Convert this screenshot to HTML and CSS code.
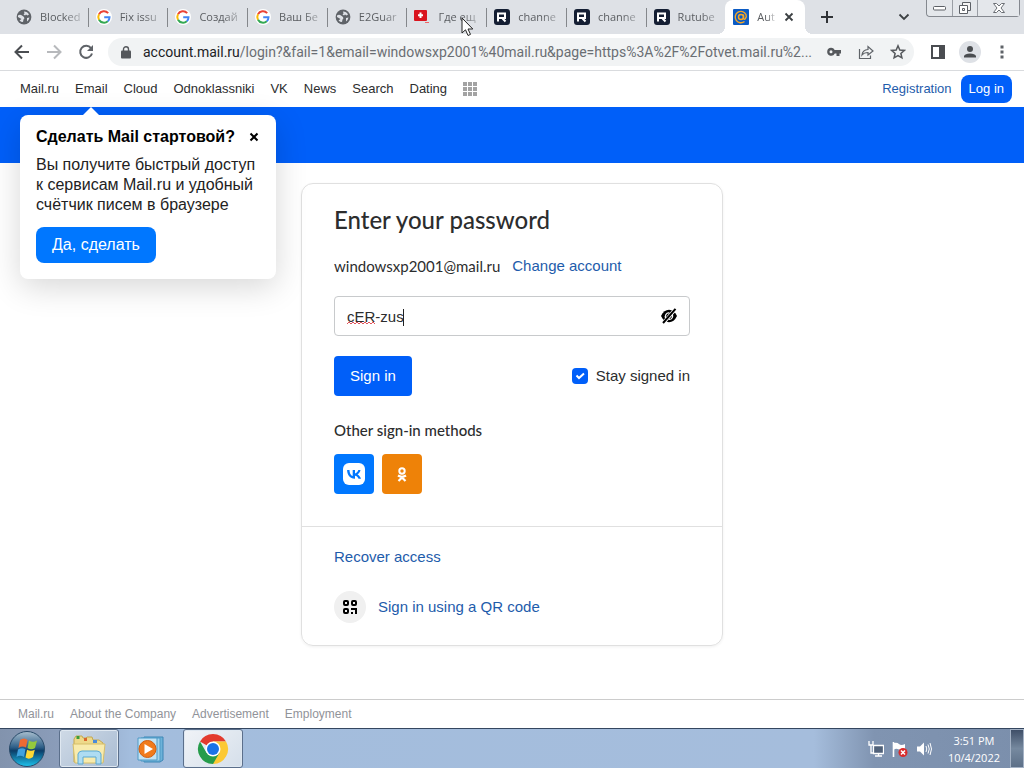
FILE: index.html
```html
<!DOCTYPE html>
<html lang="en">

<head>
    <meta charset="utf-8">
    <title>Authorization</title>
    <link rel="stylesheet" href="styles.css">
</head>

<body>
    <!-- shared icons -->
    <svg class="sprite" aria-hidden="true">
        <symbol id="globe" viewBox="0 0 16 16">
            <circle cx="8" cy="8" r="7.4" fill="#5f6368" />
            <path d="M2 6.500Q4 5 6 6.500L8 8Q9 9.500 7.500 10.500L7 13Q5 13 3.500 11.500L5.500 10L2 8ZM8 2.500Q11.500 2.500 13 5.500L11.500 6.500L10 5.500L9 6.500L7.500 5.500L8.500 4.500ZM11 9L13.500 8.500Q13 11 11 12.500Z" fill="#dee1e6" />
        </symbol>
        <symbol id="google" viewBox="0 0 16 16">
            <circle cx="8" cy="8" r="8" fill="#fff" />
            <path d="M12.200 4.100A5.700 5.700 0 0 0 3 5.300" stroke="#ea4335" />
            <path d="M3 5.300A5.700 5.700 0 0 0 3 10.700" stroke="#fbbc05" />
            <path d="M3 10.700A5.700 5.700 0 0 0 11.800 12.200" stroke="#34a853" />
            <path d="M11.800 12.200Q13.500 10.800 13.500 8.200H8.200" stroke="#4285f4" />
        </symbol>
        <symbol id="rutube" viewBox="0 0 16 16">
            <rect width="16" height="16" rx="3" fill="#141e33" />
            <path d="M4 12.500V4.500H11V9H4.500M8.500 9.500L11.500 12.500" fill="none" stroke="#fff" stroke-width="2" />
        </symbol>
    </svg>

    <div class="tab-strip">
        <div class="tabs">
            <div class="tab"><svg class="favicon"><use href="#globe" /></svg><span class="tab-title">Blocked</span></div>
            <div class="tab"><svg class="favicon google"><use href="#google" /></svg><span class="tab-title">Fix issu</span></div>
            <div class="tab"><svg class="favicon google"><use href="#google" /></svg><span class="tab-title">Создай</span></div>
            <div class="tab"><svg class="favicon google"><use href="#google" /></svg><span class="tab-title">Ваш Бе</span></div>
            <div class="tab"><svg class="favicon"><use href="#globe" /></svg><span class="tab-title">E2Guar</span></div>
            <div class="tab">
                <svg class="favicon" viewBox="0 0 16 16">
                    <rect y="1" width="13" height="11" rx="1" fill="#d9141e" />
                    <path d="M6.500 3.500V9M4 6.200H9" stroke="#fff" stroke-width="2" />
                    <path d="M11 13.500H15" stroke="#e66" />
                </svg>
                <span class="tab-title">Где ещ</span>
            </div>
            <div class="tab"><svg class="favicon"><use href="#rutube" /></svg><span class="tab-title">channe</span></div>
            <div class="tab"><svg class="favicon"><use href="#rutube" /></svg><span class="tab-title">channe</span></div>
            <div class="tab"><svg class="favicon"><use href="#rutube" /></svg><span class="tab-title">Rutube</span></div>
            <div class="tab active">
                <svg class="favicon" viewBox="0 0 16 16">
                    <rect width="16" height="16" rx="1" fill="#0b5bc4" />
                    <circle cx="8" cy="8" r="2.500" fill="none" stroke="#f9a825" stroke-width="1.500" />
                    <path d="M10.500 5.500V9Q10.800 10.800 12.200 10Q14 8 13 5.500A5.700 5.700 0 1 0 11.500 12.500" fill="none" stroke="#f9a825" stroke-width="1.400" />
                </svg>
                <span class="tab-title">Aut</span>
                <button class="icon-button tab-close" aria-label="Close tab">
                    <svg width="10" height="10" viewBox="0 0 10 10"><path d="M1.500 1.500L8.500 8.500M8.500 1.500L1.500 8.500" stroke="#3c4043" stroke-width="1.800" /></svg>
                </button>
            </div>
        </div>
        <button class="icon-button new-tab" aria-label="New tab">
            <svg width="12" height="12" viewBox="0 0 12 12"><path d="M6 0V12M0 6H12" stroke="#303337" stroke-width="2" /></svg>
        </button>
        <button class="icon-button tab-search" aria-label="Search tabs">
            <svg width="12" height="8" viewBox="0 0 12 8"><path d="M1.500 1.500L6 6L10.500 1.500" fill="none" stroke="#3c4043" stroke-width="1.800" /></svg>
        </button>
        <div class="window-buttons">
            <button aria-label="Minimize"><svg width="13" height="6" viewBox="0 0 13 6"><rect x=".5" y="1.500" width="12" height="3.500" rx="1" fill="#fff" stroke="#5c6066" /></svg></button>
            <button aria-label="Restore"><svg width="14" height="14" viewBox="0 0 14 14"><path d="M4.500 1.500H12.500V9.500H4.500Z" fill="#f5f5f5" stroke="#5c6066" /><path d="M1.500 4.500H9.500V12.500H1.500Z" fill="#fff" stroke="#5c6066" /><path d="M4.500 7.500H6.500V9.500H4.500Z" fill="none" stroke="#5c6066" /></svg></button>
            <button class="wide" aria-label="Close"><svg width="14" height="12" viewBox="0 0 14 12"><path d="M1.500 1.500H4.500L7 4L9.500 1.500H12.500L9 6L12.500 10.500H9.500L7 8L4.500 10.500H1.500L5 6Z" fill="#fff" stroke="#6b6f75" /></svg></button>
        </div>
    </div>

    <div class="toolbar">
        <button class="icon-button" aria-label="Back"><svg width="16" height="16" viewBox="0 0 16 16"><path d="M15 8H2M8 1.500L1.500 8L8 14.500" fill="none" stroke="#4a4d51" stroke-width="2" /></svg></button>
        <button class="icon-button" aria-label="Forward"><svg width="16" height="16" viewBox="0 0 16 16"><path d="M1 8H14M8 1.500L14.500 8L8 14.500" fill="none" stroke="#b7b9bc" stroke-width="2" /></svg></button>
        <button class="icon-button" aria-label="Reload"><svg width="16" height="16" viewBox="0 0 16 16"><path d="M13 4.200A6 6 0 1 0 14 9.500" fill="none" stroke="#5f6368" stroke-width="2" /><path d="M15 1V7H9Z" fill="#5f6368" /></svg></button>
        <div class="address-bar">
            <svg width="10" height="13" viewBox="0 0 10 13"><rect y="4.500" width="10" height="8" rx="1" fill="#55585c" /><path d="M2.500 5V3.200A2.500 2.500 0 0 1 7.500 3.200V5" fill="none" stroke="#55585c" stroke-width="1.400" /></svg>
            <div class="url"><span>account.mail.ru</span>/login?&amp;fail=1&amp;email=windowsxp2001%40mail.ru&amp;page=https%3A%2F%2Fotvet.mail.ru%2...</div>
            <button class="icon-button" aria-label="Passwords"><svg width="16" height="16" viewBox="0 0 16 16"><path d="M5 3.800A4 4 0 1 0 8.800 9.500H10.500V12H13.500V9.500H15V6H8.700A4 4 0 0 0 5 3.800ZM5 6.300A1.500 1.500 0 1 1 5 9.300A1.500 1.500 0 1 1 5 6.300Z" fill="#55585c" fill-rule="evenodd" /></svg></button>
            <button class="icon-button" aria-label="Share"><svg width="16" height="16" viewBox="0 0 16 16"><path d="M1.500 5V14.500H12.500V11.500M4 11Q4.500 6 10 5.500V2.500L15 7L10 11V8.500Q6 8.500 4 11Z" fill="none" stroke="#5f6368" stroke-width="1.200" /></svg></button>
            <button class="icon-button" aria-label="Bookmark"><svg width="16" height="16" viewBox="0 0 16 16"><path d="M8 1.800L9.800 6L14.300 6.400L10.900 9.400L11.900 13.800L8 11.500L4.100 13.800L5.100 9.400L1.700 6.400L6.200 6Z" fill="none" stroke="#55585c" stroke-width="1.500" /></svg></button>
        </div>
        <button class="icon-button" aria-label="Side panel"><svg width="14" height="14" viewBox="0 0 14 14"><path d="M1 1H13V13H1ZM9 1V13" fill="none" stroke="#4a4d51" stroke-width="2" /><path d="M9 1H13V13H9Z" fill="#4a4d51" /></svg></button>
        <button class="icon-button profile" aria-label="Profile"><svg width="14" height="14" viewBox="0 0 14 14"><circle cx="7" cy="4" r="3" fill="#4a4d51" /><path d="M1 12.500V11Q2 8.500 7 8.500T13 11V12.500Z" fill="#4a4d51" /></svg></button>
        <button class="icon-button" aria-label="Menu"><svg width="4" height="14" viewBox="0 0 4 14"><path d="M.5 .5H3.500V3.500H.5ZM.5 5.500H3.500V8.500H.5ZM.5 10.500H3.500V13.500H.5Z" fill="#5f6368" /></svg></button>
    </div>

    <nav class="portal-nav">
        <a href="#">Mail.ru</a>
        <a href="#">Email</a>
        <a href="#">Cloud</a>
        <a href="#">Odnoklassniki</a>
        <a href="#">VK</a>
        <a href="#">News</a>
        <a href="#">Search</a>
        <a href="#">Dating</a>
        <button class="icon-button" aria-label="All projects"><svg width="14" height="14" viewBox="0 0 14 14"><path d="M2 0V14M7 0V14M12 0V14" stroke="#a3a3a3" stroke-width="4" stroke-dasharray="4 1" /></svg></button>
        <a href="#" class="registration">Registration</a>
        <button class="log-in">Log in</button>
    </nav>

    <div class="page">
        <div class="banner"></div>
        <main>
            <form class="card">
                <div class="card-body">
                    <h1>Enter your password</h1>
                    <div class="account"><span class="account-name">windowsxp2001@mail.ru</span><a href="#">Change account</a></div>
                    <div class="password">
                        <input type="text" value="cER-zus" aria-label="Password" spellcheck="false">
                        <svg class="input-marks" width="60" height="20" viewBox="0 0 60 20">
                            <path d="M0 17L2 15L4 17L6 15L8 17L10 15L12 17L14 15L16 17L18 15L20 17L22 15L24 17L26 15L28 17" fill="none" stroke="#e0535b" />
                            <path d="M56.500 2V19" stroke="#222" />
                        </svg>
                        <button type="button" class="icon-button eye" aria-label="Hide password">
                            <svg width="18" height="16" viewBox="0 0 18 16"><path d="M1 8Q4 1.800 9 1.800T17 8Q14 14.200 9 14.200T1 8Z" /><path d="M6 10.500A3.500 3.500 0 0 1 9.500 5M12 6A3.500 3.500 0 0 1 9 11.500" fill="none" stroke="#fff" stroke-width="1.200" /><path d="M2.500 16L15.500 1" stroke="#fff" stroke-width="3.600" /><path d="M3 15L15.500 .8" stroke="#000" stroke-width="2" /></svg>
                        </button>
                    </div>
                    <div class="actions">
                        <button type="button" class="sign-in">Sign in</button>
                        <label><input type="checkbox" checked>Stay signed in</label>
                    </div>
                    <h2>Other sign-in methods</h2>
                    <div class="social">
                        <button type="button" class="vk" aria-label="VK">
                            <svg width="24" height="24" viewBox="0 0 24 24"><rect x="1" y="1" width="22" height="22" rx="6" fill="#fff" /><path d="M12.700 16.700C8 16.700 5.200 13.500 5.100 8.100H7.500C7.600 12 9.300 13.700 10.700 14V8.100H13V11.500C14.400 11.400 15.800 9.800 16.300 8.100H18.500C18.200 10.200 16.600 11.800 15.500 12.400C16.600 12.900 18.400 14.300 19 16.700H16.500C16 15.100 14.700 13.900 13 13.700V16.700Z" fill="#07f" /></svg>
                        </button>
                        <button type="button" class="ok" aria-label="Odnoklassniki">
                            <svg width="12" height="16" viewBox="0 0 12 16" fill="none" stroke="#fff" stroke-width="2"><circle cx="6" cy="5" r="2.700" /><path d="M2 9.500Q6 12 10 9.500M2.500 15L6 11.500L9.500 15" stroke-width="2.200" /></svg>
                        </button>
                    </div>
                </div>
                <div class="card-footer">
                    <a href="#">Recover access</a>
                    <a href="#" class="qr-link">
                        <span class="qr-icon"><svg width="16" height="16" viewBox="0 0 16 16"><g fill="none" stroke="#000" stroke-width="2"><rect x="2" y="2" width="4" height="4" rx="1" /><rect x="10" y="2" width="4" height="4" rx="1" /><rect x="2" y="10" width="4" height="4" rx="1" /></g><path d="M9 9H15V15H13V11H9ZM9 13H11V15H9Z" /></svg></span>
                        Sign in using a QR code
                    </a>
                </div>
            </form>
        </main>

        <!-- start page promo -->
        <div class="promo">
            <div class="promo-title">
                <b>Сделать Mail стартовой?</b>
                <button class="icon-button" aria-label="Close"><svg width="12" height="10" viewBox="0 0 12 10"><path d="M2.500 1.500L9.500 8.500M9.500 1.500L2.500 8.500" stroke="#000" stroke-width="2" /></svg></button>
            </div>
            <p>Вы получите быстрый доступ<br>к сервисам Mail.ru и удобный<br>счётчик писем в браузере</p>
            <button class="promo-button">Да, сделать</button>
        </div>
    </div>

    <footer class="page-footer">
        <a href="#">Mail.ru</a>
        <a href="#">About the Company</a>
        <a href="#">Advertisement</a>
        <a href="#">Employment</a>
    </footer>

    <div class="taskbar">
        <button class="start" aria-label="Start">
            <svg width="38" height="38" viewBox="0 0 38 38">
                <defs>
                    <linearGradient id="orb" x2="0" y2="1">
                        <stop offset="0" stop-color="#a9bfcf" />
                        <stop offset=".45" stop-color="#2e5f88" />
                        <stop offset=".55" stop-color="#0b3d68" />
                        <stop offset="1" stop-color="#1cc3ee" />
                    </linearGradient>
                </defs>
                <circle cx="19" cy="19" r="17.500" fill="url(#orb)" stroke="#294a69" />
                <path d="M12 10Q16 7 19.500 10L18 17.500Q14 15.500 10.500 18Z" fill="#ee6a32" />
                <path d="M21 10.500Q25 13 29 10.500L27 18Q23 20.500 19.500 18Z" fill="#94c93d" />
                <path d="M10 19.500Q14 17 17.500 19.200L16 27Q12 24.500 8.500 27Z" fill="#3fa2df" />
                <path d="M19 19.700Q23 22 26.800 19.700L25 27Q21 30 17.500 27.500Z" fill="#fdd835" />
            </svg>
        </button>
        <button class="task running" aria-label="Windows Explorer">
            <svg width="36" height="32" viewBox="0 0 36 32">
                <path d="M3 6L5 3H11L12 5H15L16 4H21L22 7H28L32 10V29H3Z" fill="#eed98a" stroke="#c3a850" />
                <path d="M7 3V6" stroke="#3a9d3a" stroke-width="3" />
                <path d="M13 5H16V8H13Z" fill="#d9672e" />
                <path d="M22 7H26V10H22Z" fill="#4c8bd8" />
                <path d="M2 11H34L32 30H4Z" fill="#f8ebad" stroke="#d5be6b" />
                <path d="M7 31V21Q8 18 11 18H26Q29 18 30 21V31H25V24H12V31Z" fill="#aedcf2" stroke="#5ba9d2" />
            </svg>
        </button>
        <button class="task" aria-label="Windows Media Player">
            <svg width="30" height="28" viewBox="0 0 30 28">
                <path d="M8 2H27V25L24 27H8Z" fill="#6db2d9" stroke="#3c86b5" />
                <path d="M5 3H24V26H5Z" fill="#a3d4ee" stroke="#4e9ac6" />
                <path d="M2 3H21V25H2Z" fill="#c3e3f4" stroke="#4e9ac6" />
                <circle cx="11.500" cy="14" r="8.500" fill="#f17b1c" stroke="#d05e10" />
                <path d="M8.500 9V19L17 14Z" fill="#fff" />
            </svg>
        </button>
        <button class="task running current" aria-label="Google Chrome">
            <svg width="32" height="32" viewBox="0 0 32 32">
                <path d="M16 16L3 8.500A15 15 0 0 1 29 8.500H16Z" fill="#e33b2e" />
                <path d="M16 16V8.500H29A15 15 0 0 1 16 31Z" fill="#fcc934" />
                <path d="M16 16L22.500 19.700L16 31A15 15 0 0 1 3 8.500L9.500 19.700Z" fill="#269c4b" />
                <circle cx="16" cy="16" r="7.500" fill="#fff" />
                <circle cx="16" cy="16" r="6" fill="#1a73e8" />
            </svg>
        </button>
        <div class="tray">
            <svg width="16" height="16" viewBox="0 0 16 16"><path d="M5.500 4.500H15.500V12.500H5.500ZM7 15H14M10.500 12V15" fill="#51627a" stroke="#fff" stroke-width="1.300" /><path d="M1 0V4H5V0M3 4V12H6" fill="none" stroke="#fff" stroke-width="1.300" /></svg>
            <svg width="16" height="16" viewBox="0 0 16 16"><path d="M1.500 1V16" stroke="#fff" stroke-width="1.600" /><path d="M2 2Q5 1 7 3T13 3V9Q10 10 7 8.500T2 8.500Z" fill="#fff" /><circle cx="11" cy="11.500" r="4.500" fill="#d92b2b" /><path d="M9 9.500L13 13.500M13 9.500L9 13.500" stroke="#fff" stroke-width="1.500" /></svg>
            <svg width="16" height="16" viewBox="0 0 16 16"><path d="M1 5.500H4L8 1.500V14.500L4 10.500H1Z" fill="#fff" /><path d="M10 5Q11.500 8 10 11M12 3.500Q14.500 8 12 12.500M14 2Q17 8 14 14" fill="none" stroke="#fff" /></svg>
            <div class="clock">3:51 PM<br>10/4/2022</div>
        </div>
        <button class="show-desktop" aria-label="Show desktop"></button>
    </div>

    <svg class="cursor" width="13" height="20" viewBox="0 0 13 20"><path d="M1 1V16L4.500 12.800L7 18.500L9.500 17.400L7 12H11.800Z" fill="#fff" stroke="#222" /></svg>
</body>

</html>
```

FILE: styles.css
```css
* {
    box-sizing: border-box;
}

body {
    margin: 0;
    min-height: 100vh;
    display: flex;
    flex-direction: column;
    background: #fff;
    color: #2c2d2e;
    font-family: "Liberation Sans", Arial, sans-serif;
    font-size: 15px;
    line-height: 20px;
}

a {
    color: #1e5cab;
    text-decoration: none;
}

button {
    padding: 0;
    border: 0;
    font: inherit;
    cursor: pointer;
}

svg {
    display: block;
    flex: none;
}

.sprite {
    position: absolute;
    width: 0;
    height: 0;
}

.icon-button {
    display: flex;
    align-items: center;
    justify-content: center;
    background: none;
}

/*browser tabs*/

.tab-strip {
    display: flex;
    align-items: center;
    height: 34px;
    padding: 0 4px 0 8px;
    background: #dee1e6;
}

.tabs {
    display: grid;
    grid-template-columns: repeat(10, minmax(0, 1fr));
    align-self: stretch;
    flex: 0 1 797px;
    min-width: 0;
}

.tab {
    position: relative;
    display: flex;
    align-items: center;
    min-width: 0;
    gap: 8px;
    padding: 0 0 0 8px;
    color: #5a5d61;
    font-family: "Open Sans", sans-serif;
    font-size: 11px;
}

/*separator between the tabs*/

.tab:not(.active):after {
    content: '';
    position: absolute;
    right: -1px;
    top: 8px;
    width: 1px;
    height: 19px;
    background: #84878b;
}

.tab:nth-last-child(2):after {
    content: none !important;
}

.tab-title {
    flex: 1;
    min-width: 0;
    overflow: hidden;
    white-space: nowrap;
    -webkit-mask-image: linear-gradient(to right, #000 50%, transparent);
    mask-image: linear-gradient(to right, #000 50%, transparent);
}

.tab.active {
    padding-right: 8px;
    background: #fff;
    border-radius: 8px 8px 0 0;
}

.tab.active:before,
.tab.active:after {
    content: '';
    position: absolute;
    bottom: 0;
    width: 8px;
    height: 8px;
}

.tab.active:before {
    left: -8px;
    background: radial-gradient(circle at 0 0, #dee1e6 8px, #fff 8px);
}

.tab.active:after {
    right: -8px;
    background: radial-gradient(circle at 100% 0, #dee1e6 8px, #fff 8px);
}

.favicon {
    width: 16px;
    height: 16px;
}

.google {
    fill: none;
    stroke-width: 2px;
}

.tab-close {
    width: 16px;
    height: 16px;
    margin-left: -4px;
}

.new-tab {
    margin-left: 16px;
}

.tab-search {
    margin-left: auto;
    margin-right: 16px;
}

.window-buttons {
    display: flex;
    align-self: flex-start;
    height: 17px;
    border: 1px solid #84888f;
    border-top: 0;
    border-radius: 0 0 4px 4px;
}

.window-buttons button {
    display: flex;
    align-items: center;
    justify-content: center;
    width: 25px;
    background: #e4e7eb;
    border-radius: 0 0 4px 4px;
}

.window-buttons button + button {
    border-left: 1px solid #9a9ea5;
    border-radius: 0;
}

.window-buttons .wide {
    width: 42px;
}

/*toolbar*/

.toolbar {
    display: flex;
    align-items: center;
    gap: 16px;
    height: 37px;
    padding: 0 14px;
    border-bottom: 1px solid #d9dbde;
}

.toolbar button {
    width: 16px;
}

.address-bar {
    display: flex;
    align-items: center;
    flex: 1;
    min-width: 0;
    height: 28px;
    margin-left: -2px;
    padding: 0 8px 0 13px;
    gap: 16px;
    background: #f1f3f4;
    border-radius: 14px;
}

.url {
    flex: 1;
    min-width: 0;
    margin-left: -4px;
    margin-right: -8px;
    white-space: nowrap;
    color: #6a6e73;
    font-family: Roboto, sans-serif;
    font-size: 14px;
}

.url span {
    color: #202124;
}

.toolbar .profile {
    width: 22px;
    height: 22px;
    margin: 0 -3px;
    background: #dee1e6;
    border-radius: 50%;
}

/*portal navigation*/

.portal-nav {
    display: flex;
    align-items: center;
    gap: 16px;
    height: 36px;
    padding: 0 12px 0 20px;
    font-size: 13px;
}

.portal-nav a {
    color: #2c2d2e;
}

.portal-nav .registration {
    margin-left: auto;
    margin-right: -7px;
    color: #1e5cab;
}

.log-in {
    height: 28px;
    padding: 0 8px;
    background: #005ff9;
    border-radius: 8px;
    color: #fff;
}

/*page*/

.page {
    position: relative;
    flex: 1;
}

.banner {
    height: 56px;
    background: #005ff9;
}

main {
    padding: 20px;
}

.card {
    max-width: 422px;
    margin: 0 auto;
    border: 1px solid #e0e0e0;
    border-radius: 12px;
    box-shadow: 0 1px 3px rgba(0, 0, 0, 0.06);
}

.card-body {
    padding: 20px 32px 32px;
}

h1 {
    margin: 0 0 20px;
    font-family: Lato, sans-serif;
    font-size: 24px;
    font-weight: 500;
    line-height: 32px;
}

h2 {
    margin: 24px 0 14px;
    font-family: Lato, sans-serif;
    font-size: 15px;
    font-weight: 500;
    line-height: 20px;
}

.account {
    display: flex;
    gap: 12px;
}

.account-name {
    font-family: Lato, sans-serif;
}

.password {
    position: relative;
    margin: 20px 0;
}

.password input {
    display: block;
    width: 100%;
    height: 40px;
    padding: 0 40px 0 12px;
    border: 1px solid #c8cacc;
    border-radius: 4px;
    outline: 0;
    color: #2c2d2e;
    font: inherit;
}

.input-marks {
    position: absolute;
    left: 13px;
    top: 11px;
    pointer-events: none;
}

.eye {
    position: absolute;
    right: 12px;
    top: 12px;
}

.actions {
    display: flex;
    align-items: center;
    justify-content: space-between;
}

.sign-in {
    height: 40px;
    padding: 0 16px;
    background: #005ff9;
    border-radius: 4px;
    color: #fff;
}

.actions label {
    display: flex;
    align-items: center;
    gap: 8px;
}

.actions input {
    appearance: none;
    width: 16px;
    height: 16px;
    margin: 0;
    border-radius: 4px;
    background: #005ff9 url("data:image/svg+xml,%3Csvg xmlns='http://www.w3.org/2000/svg' viewBox='0 0 16 16'%3E%3Cpath d='M4.500 7.500L7 10L12 5.500' fill='none' stroke='white' stroke-width='2'/%3E%3C/svg%3E");
}

.social {
    display: flex;
    gap: 8px;
}

.social button {
    display: flex;
    align-items: center;
    justify-content: center;
    width: 40px;
    height: 40px;
    border-radius: 4px;
}

.vk {
    background: #07f;
}

.ok {
    background: #ee8208;
}

.card-footer {
    display: flex;
    flex-direction: column;
    align-items: flex-start;
    gap: 24px;
    padding: 20px 32px 22px;
    border-top: 1px solid #e0e0e0;
}

.qr-link {
    display: flex;
    align-items: center;
    gap: 12px;
}

.qr-icon {
    display: flex;
    align-items: center;
    justify-content: center;
    width: 32px;
    height: 32px;
    background: #f0f0f0;
    border-radius: 50%;
}

/*promo popup, hangs under the Email link*/

.promo {
    position: absolute;
    left: 20px;
    top: 8px;
    width: 256px;
    padding: 12px 16px 16px;
    background: #fff;
    border-radius: 8px;
    box-shadow: 0 8px 32px rgba(0, 0, 0, 0.16);
    color: #222;
    font-size: 16px;
}

.promo:before {
    content: '';
    position: absolute;
    left: 63px;
    top: -8px;
    border: 8px solid transparent;
    border-top: 0;
    border-bottom-color: #fff;
}

.promo-title {
    display: flex;
    align-items: center;
    justify-content: space-between;
    color: #000;
}

.promo p {
    margin: 8px 0 12px;
}

.promo-button {
    height: 36px;
    padding: 0 16px;
    background: #07f;
    border-radius: 8px;
    color: #fff;
}

.page-footer {
    display: flex;
    align-items: center;
    gap: 16px;
    height: 29px;
    padding: 0 18px;
    border-top: 1px solid #ccc;
    font-size: 12px;
}

.page-footer a {
    color: #919399;
}

/*taskbar*/

.taskbar {
    display: flex;
    height: 40px;
    background: linear-gradient(to right, #8293ad, #8b9dba 60px, #a3bddd 130px, #a5bddc calc(100% - 210px), #8094b1 calc(100% - 150px), #7b8fac);
    border-top: 1px solid #34465f;
}

.taskbar button {
    display: flex;
    align-items: center;
    justify-content: center;
    background: none;
}

.taskbar .start {
    width: 54px;
    margin-right: 5px;
}

.taskbar .task {
    width: 60px;
    margin-right: 2px;
    border-radius: 3px;
}

.taskbar .running {
    background: linear-gradient(135deg, #cfdae6, #a9bcd3);
    border: 1px solid #5b6f8b;
    box-shadow: inset 0 0 0 1px #dfe8f1;
}

.taskbar .current {
    background: linear-gradient(135deg, #f0f3f7, #d5dfea);
}

.tray {
    display: flex;
    align-items: center;
    gap: 8px;
    margin-left: auto;
    margin-right: 10px;
}

.clock {
    margin-left: 8px;
    color: #fff;
    font-family: "Open Sans", sans-serif;
    font-size: 11px;
    line-height: 17px;
    text-align: center;
}

.taskbar .show-desktop {
    width: 14px;
    background: linear-gradient(#3f4f68, #76899f 50%, #5d7088);
    border: 1px solid #a4b2c5;
}

/*mouse pointer over the tabs*/

.cursor {
    position: absolute;
    left: 461px;
    top: 17px;
}
```
